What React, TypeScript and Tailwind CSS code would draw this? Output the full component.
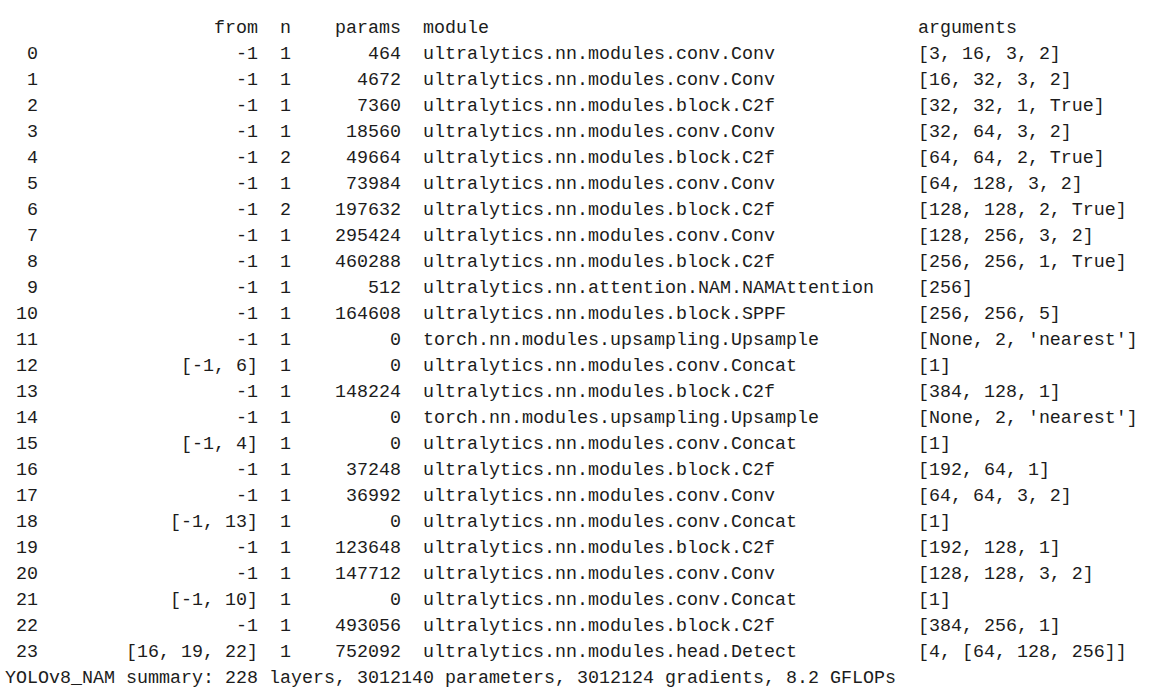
type Layer = [string, number, number, string, string];

const layers: Layer[] = [
  ['-1', 1, 464, 'ultralytics.nn.modules.conv.Conv', '[3, 16, 3, 2]'],
  ['-1', 1, 4672, 'ultralytics.nn.modules.conv.Conv', '[16, 32, 3, 2]'],
  ['-1', 1, 7360, 'ultralytics.nn.modules.block.C2f', '[32, 32, 1, True]'],
  ['-1', 1, 18560, 'ultralytics.nn.modules.conv.Conv', '[32, 64, 3, 2]'],
  ['-1', 2, 49664, 'ultralytics.nn.modules.block.C2f', '[64, 64, 2, True]'],
  ['-1', 1, 73984, 'ultralytics.nn.modules.conv.Conv', '[64, 128, 3, 2]'],
  ['-1', 2, 197632, 'ultralytics.nn.modules.block.C2f', '[128, 128, 2, True]'],
  ['-1', 1, 295424, 'ultralytics.nn.modules.conv.Conv', '[128, 256, 3, 2]'],
  ['-1', 1, 460288, 'ultralytics.nn.modules.block.C2f', '[256, 256, 1, True]'],
  ['-1', 1, 512, 'ultralytics.nn.attention.NAM.NAMAttention', '[256]'],
  ['-1', 1, 164608, 'ultralytics.nn.modules.block.SPPF', '[256, 256, 5]'],
  ['-1', 1, 0, 'torch.nn.modules.upsampling.Upsample', "[None, 2, 'nearest']"],
  ['[-1, 6]', 1, 0, 'ultralytics.nn.modules.conv.Concat', '[1]'],
  ['-1', 1, 148224, 'ultralytics.nn.modules.block.C2f', '[384, 128, 1]'],
  ['-1', 1, 0, 'torch.nn.modules.upsampling.Upsample', "[None, 2, 'nearest']"],
  ['[-1, 4]', 1, 0, 'ultralytics.nn.modules.conv.Concat', '[1]'],
  ['-1', 1, 37248, 'ultralytics.nn.modules.block.C2f', '[192, 64, 1]'],
  ['-1', 1, 36992, 'ultralytics.nn.modules.conv.Conv', '[64, 64, 3, 2]'],
  ['[-1, 13]', 1, 0, 'ultralytics.nn.modules.conv.Concat', '[1]'],
  ['-1', 1, 123648, 'ultralytics.nn.modules.block.C2f', '[192, 128, 1]'],
  ['-1', 1, 147712, 'ultralytics.nn.modules.conv.Conv', '[128, 128, 3, 2]'],
  ['[-1, 10]', 1, 0, 'ultralytics.nn.modules.conv.Concat', '[1]'],
  ['-1', 1, 493056, 'ultralytics.nn.modules.block.C2f', '[384, 256, 1]'],
  ['[16, 19, 22]', 1, 752092, 'ultralytics.nn.modules.head.Detect', '[4, [64, 128, 256]]'],
];

// same formatting as the yolo model summary printout
const header = ''.padStart(3) + 'from'.padStart(20) + 'n'.padStart(3) + 'params'.padStart(10) + '  ' + 'module'.padEnd(45) + 'arguments';

const rows = layers.map(
  ([from, n, params, mod, args], i) =>
    String(i).padStart(3) + from.padStart(20) + String(n).padStart(3) + String(params).padStart(10) + '  ' + mod.padEnd(45) + args
);

const summary = 'YOLOv8_NAM summary: 228 layers, 3012140 parameters, 3012124 gradients, 8.2 GFLOPs';

export default function App() {
  return (
    <div className="w-[1163px] h-[697px] bg-white overflow-hidden">
      <pre
        className="pt-[16px] pl-[5px] m-0 whitespace-pre text-[18.33px] leading-[26px] text-[#1c1c1c]"
        style={{ fontFamily: '"Liberation Mono", "DejaVu Sans Mono", monospace' }}
      >
        {[header, ...rows, summary].join('\n')}
      </pre>
    </div>
  );
}
